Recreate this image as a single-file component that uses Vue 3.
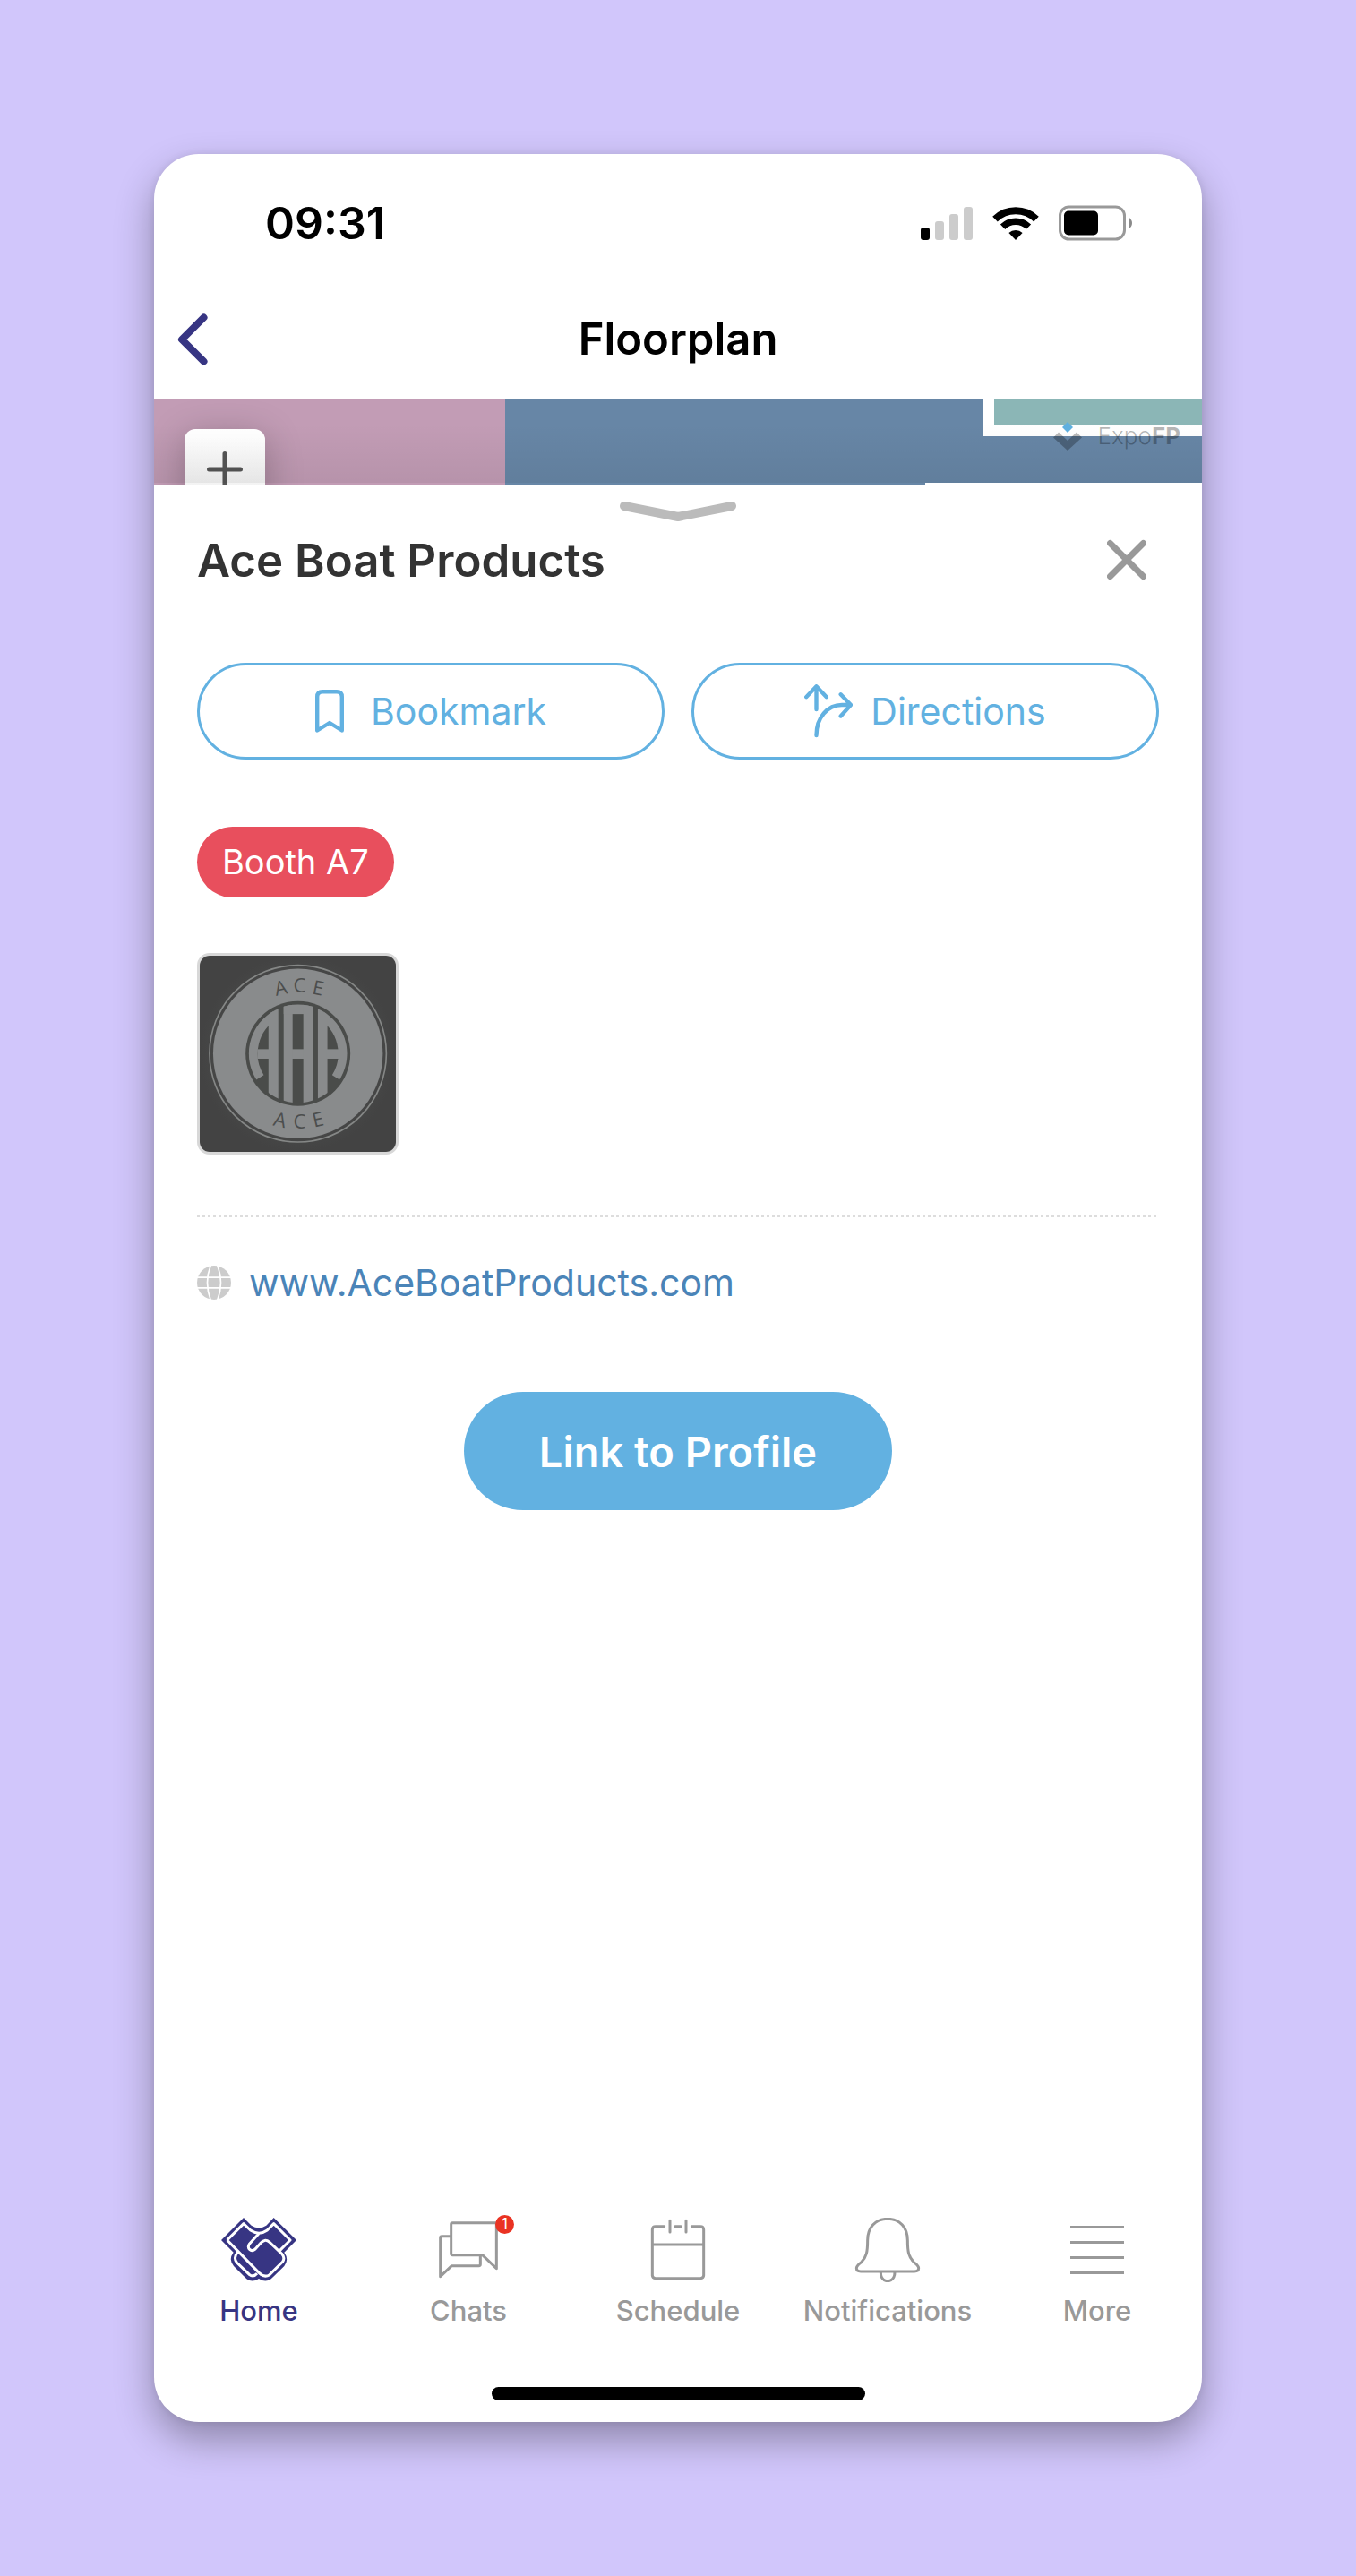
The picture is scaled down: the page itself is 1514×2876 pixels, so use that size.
<template>
  <div class="page">
    <main class="phone">
      <div class="status-bar">
        <span class="clock">09:31</span>
        <div class="status-icons">
          <svg class="signal" viewBox="0 0 58 38" aria-hidden="true">
            <rect x="0" y="24" width="10" height="14" rx="3" fill="#000" />
            <rect x="16" y="17" width="10" height="21" rx="3" fill="#ccc" />
            <rect x="32" y="9" width="10" height="29" rx="3" fill="#ccc" />
            <rect x="48" y="1" width="10" height="37" rx="3" fill="#ccc" />
          </svg>
          <svg class="wifi" viewBox="0 0 52 38" aria-hidden="true">
            <path d="M3 14.6a33 33 0 0 1 46 0" fill="none" stroke="#000" stroke-width="8" />
            <path d="M11.6 23.2a20.5 20.5 0 0 1 28.8 0" fill="none" stroke="#000" stroke-width="7.6" />
            <path d="M26 38l-7.6-8a11 11 0 0 1 15.2 0z" fill="#000" />
          </svg>
          <svg class="battery" viewBox="0 0 83 40" aria-hidden="true">
            <rect x="1.5" y="2" width="72" height="36" rx="10" fill="none" stroke="#999" stroke-width="3" />
            <rect x="6" y="6.500" width="38" height="27" rx="5" fill="#000" />
            <path d="M78 13.500q4 2.500 4 6.500t-4 6.500z" fill="#8a8a8a" />
          </svg>
        </div>
      </div>

      <header class="nav-bar">
        <button class="back" type="button" aria-label="Back">
          <svg viewBox="0 0 34 58" aria-hidden="true">
            <path d="M29.500 4.500L5 29l24.500 24.500" />
          </svg>
        </button>
        <h1>Floorplan</h1>
      </header>

      <div class="map">
        <div class="hall hall-pink">
          <button class="zoom-in" type="button" aria-label="Zoom in">
            <svg viewBox="0 0 40 40" aria-hidden="true"><path d="M2.500 20h35M20 2.500v35" /></svg>
          </button>
        </div>
        <div class="hall hall-blue">
          <div class="hall-teal"></div>
          <div class="aisle"></div>
        </div>
        <div class="map-shade"></div>
        <div class="brand">
          <svg viewBox="0 0 32 32" aria-hidden="true">
            <path d="M16 0l6 6-6 6-6-6z" fill="#5fb0e0" />
            <path d="M0 17.500l6-6 10 9.500 10-9.500 6 6L16 32z" fill="#000" fill-opacity=".27" />
          </svg>
          <span>Expo<b>FP</b></span>
        </div>
      </div>

      <section class="sheet">
        <svg class="handle" viewBox="0 0 130 24" aria-hidden="true"><path d="M5 6l60 12 60-12" /></svg>
        <div class="sheet-title">
          <h2>Ace Boat Products</h2>
          <button class="close" type="button" aria-label="Close">
            <svg viewBox="0 0 44 44" aria-hidden="true"><path d="M3.500 3.500l37 37M40.500 3.500l-37 37" /></svg>
          </button>
        </div>

        <div class="actions">
          <button class="action" type="button">
            <svg class="bookmark-icon" viewBox="0 0 32 48" aria-hidden="true">
              <path d="M2.200 45.500V8q0-5.800 5.800-5.800h16q5.800 0 5.800 5.800v37.500L16 37z" />
            </svg>
            Bookmark
          </button>
          <button class="action" type="button">
            <svg class="directions-icon" viewBox="0 0 54 60" aria-hidden="true">
              <path d="M13.500 28V2.500M2.200 14.200L13.500 2.300l11.300 11.900M13.500 57C13.500 37 26 23 42 23h9M40.700 11.300L52 23 40.700 35.500" />
            </svg>
            Directions
          </button>
        </div>

        <span class="booth">Booth A7</span>

        <svg class="logo" viewBox="68 500 659 659" role="img" aria-label="Ace logo">
          <defs>
            <radialGradient id="plate">
              <stop offset="0.500" stop-color="#4e504f" />
              <stop offset="1" stop-color="#434343" />
            </radialGradient>
            <clipPath id="core"><circle cx="398" cy="829" r="165" /></clipPath>
          </defs>
          <rect x="68" y="500" width="659" height="659" fill="url(#plate)" />
          <circle cx="398" cy="829" r="297" fill="none" stroke="#858786" stroke-width="5" />
          <circle cx="398" cy="829" r="285" fill="#898b8c" />
          <circle cx="398" cy="829" r="176" fill="#4a4c4a" />
          <g clip-path="url(#core)" fill="#898b8c">
            <path d="M270 909A151 151 0 0 1 321 699M526 909A151 151 0 0 0 475 699" fill="none" stroke="#898b8c" stroke-width="31" />
            <rect x="299" y="660" width="33" height="340" />
            <rect x="262" y="814" width="40" height="32" />
            <rect x="350" y="660" width="30" height="340" />
            <rect x="350" y="660" width="98" height="36" />
            <rect x="378" y="814" width="40" height="32" />
            <rect x="416" y="660" width="32" height="340" />
            <rect x="465" y="660" width="32" height="340" />
            <rect x="495" y="814" width="40" height="32" />
          </g>
          <g class="logo-text">
            <text v-for="l in logoLetters" :key="l.id" :transform="`translate(${l.x} ${l.y}) rotate(${l.turn})`">{{ l.char }}</text>
          </g>
        </svg>

        <hr class="rule" />

        <a class="website" href="#">
          <svg viewBox="0 0 38 38" aria-hidden="true">
            <circle cx="19" cy="19" r="19" fill="#ccc" />
            <path d="M0 13.200h38M0 24.800h38M15.500-1Q7.500 19 15.500 39M22.500-1Q30.500 19 22.500 39" fill="none" stroke="#fff" stroke-width="1.700" />
          </svg>
          <span>www.AceBoatProducts.com</span>
        </a>

        <button class="profile" type="button">Link to Profile</button>
      </section>

      <nav class="tabs">
        <a v-for="tab in tabs" :key="tab.name" href="#" class="tab" :class="{ active: tab.name === current }" @click.prevent="current = tab.name">
          <span class="tab-icon">
            <svg v-if="tab.name === 'Home'" viewBox="78 78 252 216" aria-hidden="true">
              <path fill="currentColor" d="M153 78l26 26q25 15 50 0l25-26 76 75-41 41q17 24 0 46l-44 43q-19 14-41-1-22 15-41 1l-43-43q-19-22-1-46l-41-41z" />
              <path class="knockout" d="M98 153l55-55 23 22q29 19 56 0l22-22 55 55-37 37M98 153l107 110q17 17 35 6l44-44q8-13-2-25l-42-40q-17-14-32 5l-16 18q-11 9-19 1-8-8 0-19l33-36M134 193q-17 18-4 35l42 40q13 11 26-3" />
            </svg>
            <svg v-else-if="tab.name === 'Chats'" class="line" viewBox="783 78 252 216" aria-hidden="true">
              <path d="M856 95h147v153l-47-45H856q-5 0-5-5v-98q0-5 5-5zM851 140h-31q-5 0-5 5v130l38-36h91q5 0 5-5v-31" />
            </svg>
            <svg v-else-if="tab.name === 'Schedule'" class="line" viewBox="165 78 252 216" aria-hidden="true">
              <path d="M245 107h-29q-11 0-11 11v152q0 11 11 11h150q11 0 11-11V118q0-11-11-11h-29M281 107h20M205 168h172M264 88v38M318 88v38" />
            </svg>
            <svg v-else-if="tab.name === 'Notifications'" class="line" viewBox="864 78 252 216" aria-hidden="true">
              <path d="M990 82c-42 0-67 30-67 72 0 40-4 55-20 72-10 9-17 13-17 21 0 7 6 11 14 11h180c8 0 14-4 14-11 0-8-7-12-17-21-16-17-20-32-20-72 0-42-25-72-67-72zM967 260c0 18 8 30 23 30s24-12 24-30" />
            </svg>
            <svg v-else class="line" viewBox="0 0 84 72" aria-hidden="true">
              <path class="bars" d="M12 10.500h60M12 27.500h60M12 44.500h60M12 61.500h60" />
            </svg>
            <span v-if="tab.badge" class="badge">{{ tab.badge }}</span>
          </span>
          <span class="tab-label">{{ tab.name }}</span>
        </a>
      </nav>
      <div class="home-indicator"></div>
    </main>
  </div>
</template>

<script setup>
import { ref } from 'vue';
const current = ref('Home');
const tabs = [
  { name: 'Home' },
  { name: 'Chats', badge: 1 },
  { name: 'Schedule' },
  { name: 'Notifications' },
  { name: 'More' },
];
const logoLetters = [
  { id: 1, char: 'A', x: 345, y: 631, turn: -12 },
  { id: 2, char: 'C', x: 403, y: 622, turn: 0 },
  { id: 3, char: 'E', x: 461, y: 631, turn: 12 },
  { id: 4, char: 'A', x: 333, y: 1074, turn: 13 },
  { id: 5, char: 'C', x: 403, y: 1082, turn: 0 },
  { id: 6, char: 'E', x: 470, y: 1073, turn: -13 },
];
</script>

<style>
body { background: #d1c6fb; }
</style>

<style scoped>
.page { min-height: 100vh; box-sizing: border-box; padding: 172px; background: #d1c6fb; display: flex; font-family: Inter, "Liberation Sans", sans-serif; }
.page * { box-sizing: border-box; }
button { font-family: inherit; background: none; border: none; padding: 0; cursor: pointer; }
svg { display: block; flex: none; }
.phone { flex: 1; min-width: 0; display: flex; flex-direction: column; background: #fff; border-radius: 50px; overflow: hidden; box-shadow: 0 20px 44px rgba(0,0,0,0.32), 0 0 8px rgba(0,0,0,0.08); }

.status-bar { height: 154px; padding: 0 77px 0 124px; display: flex; align-items: center; justify-content: space-between; }
.clock { font-size: 50px; font-weight: 600; color: #000; }
.status-icons { display: flex; align-items: center; gap: 22px; }
.signal { width: 58px; height: 38px; }
.wifi { width: 52px; height: 38px; }
.battery { width: 83px; height: 40px; }

.nav-bar { height: 119px; padding: 0 26px 14px; display: grid; grid-template-columns: 1fr auto 1fr; align-items: center; }
.nav-bar h1 { margin: 0; font-size: 49px; line-height: 60px; font-weight: 600; color: #000; }
.back { justify-self: start; }
.back svg { width: 34px; height: 58px; }
.back path { fill: none; stroke: #373583; stroke-width: 8; stroke-linecap: round; stroke-linejoin: round; }

.map { position: relative; height: 96px; display: flex; overflow: hidden; }
.hall-pink { flex: 0 0 392px; background: #c29cb5; padding: 34px; }
.hall-blue { flex: 1; background: #6786a6; display: flex; flex-direction: column; align-items: flex-end; justify-content: space-between; }
.hall-teal { width: 245px; height: 42px; background: #8bb6b6; border-left: 13px solid #fff; border-bottom: 12px solid #fff; }
.aisle { width: 309px; height: 2px; background: #fff; }
.map-shade { position: absolute; inset: 0 0 2px; background: linear-gradient(rgba(0,0,0,0) 30%, rgba(0,0,0,0.06)); pointer-events: none; }
.zoom-in { width: 90px; height: 90px; border-radius: 12px; background: linear-gradient(#fff 10%, #ededed); box-shadow: 0 8px 40px rgba(0,0,0,0.25); display: flex; align-items: center; justify-content: center; }
.zoom-in svg { width: 40px; height: 40px; }
.zoom-in path { stroke: #555; stroke-width: 5; stroke-linecap: round; }
.brand { position: absolute; top: 24px; right: 24px; display: flex; align-items: center; gap: 18px; font-size: 26px; line-height: 32px; font-weight: 300; color: rgba(0,0,0,0.28); }
.brand svg { width: 32px; height: 36px; }
.brand b { font-weight: 700; }

.sheet { flex: 1; padding: 18px 48px 48px; display: flex; flex-direction: column; align-items: flex-start; }
.handle { width: 130px; height: 24px; align-self: center; }
.handle path { fill: none; stroke: #bbb; stroke-width: 10; stroke-linecap: round; stroke-linejoin: round; }
.sheet-title { width: 100%; height: 84px; padding-right: 14px; display: flex; align-items: center; justify-content: space-between; }
.sheet-title h2 { margin: 0; font-size: 51px; font-weight: 600; color: #333; }
.close svg { width: 44px; height: 48px; }
.close path { stroke: #999; stroke-width: 7; stroke-linecap: round; }
.actions { width: 100%; margin-top: 73px; display: grid; grid-template-columns: 1fr 1fr; gap: 30px; }
.action { height: 108px; border: 3px solid #62b1e1; border-radius: 54px; color: #62b1e1; font-size: 41px; display: flex; align-items: center; justify-content: center; gap: 30px; }
.action svg { fill: none; stroke: currentColor; stroke-width: 4.4; stroke-linecap: round; stroke-linejoin: round; }
.bookmark-icon { width: 32px; height: 48px; }
.directions-icon { width: 54px; height: 60px; }
.action:last-child { gap: 20px; }
.booth { margin-top: 75px; padding: 0 28px; border-radius: 40px; background: #e84f5d; color: #fff; font-size: 38px; line-height: 79px; }
.logo { width: 225px; height: 225px; margin-top: 62px; border: 3px solid #d8d8d8; border-radius: 14px; }
.logo-text { font-family: "Open Sans", sans-serif; font-size: 66px; fill: #4c4e4e; text-anchor: middle; }
.rule { width: 100%; height: 3px; margin: 67px 0 0; border: none; background: repeating-linear-gradient(90deg, #ddd 0 3px, #fff 3px 6px); }
.website { margin-top: 48px; display: flex; align-items: center; gap: 20px; color: #4a84b8; font-size: 41px; line-height: 50px; text-decoration: none; }
.website svg { width: 38px; height: 38px; }
.profile { align-self: center; margin-top: 97px; height: 132px; padding: 0 84px; border-radius: 66px; background: #62b1e1; color: #fff; font-size: 47px; font-weight: 600; }

.tabs { display: grid; grid-template-columns: repeat(5, 1fr); }
.tab { display: flex; flex-direction: column; align-items: center; gap: 12px; color: #999; text-decoration: none; }
.tab.active { color: #373583; }
.tab-icon { position: relative; width: 84px; height: 72px; }
.tab-icon svg { width: 84px; height: 72px; }
.tab-label { font-size: 31px; line-height: 40px; font-weight: 500; }
.line { fill: none; stroke: currentColor; stroke-width: 9; stroke-linecap: round; stroke-linejoin: round; }
.bars { stroke-width: 3; stroke-linecap: butt; }
.knockout { fill: none; stroke: #fff; stroke-width: 9; stroke-linejoin: round; }
.badge { position: absolute; top: -3px; right: -9px; width: 21px; height: 21px; border-radius: 50%; background: #ea3323; color: #fff; font-size: 17px; line-height: 21px; text-align: center; }
.home-indicator { width: 417px; max-width: 40%; height: 15px; margin: 65px auto 24px; border-radius: 8px; background: #000; }
</style>
